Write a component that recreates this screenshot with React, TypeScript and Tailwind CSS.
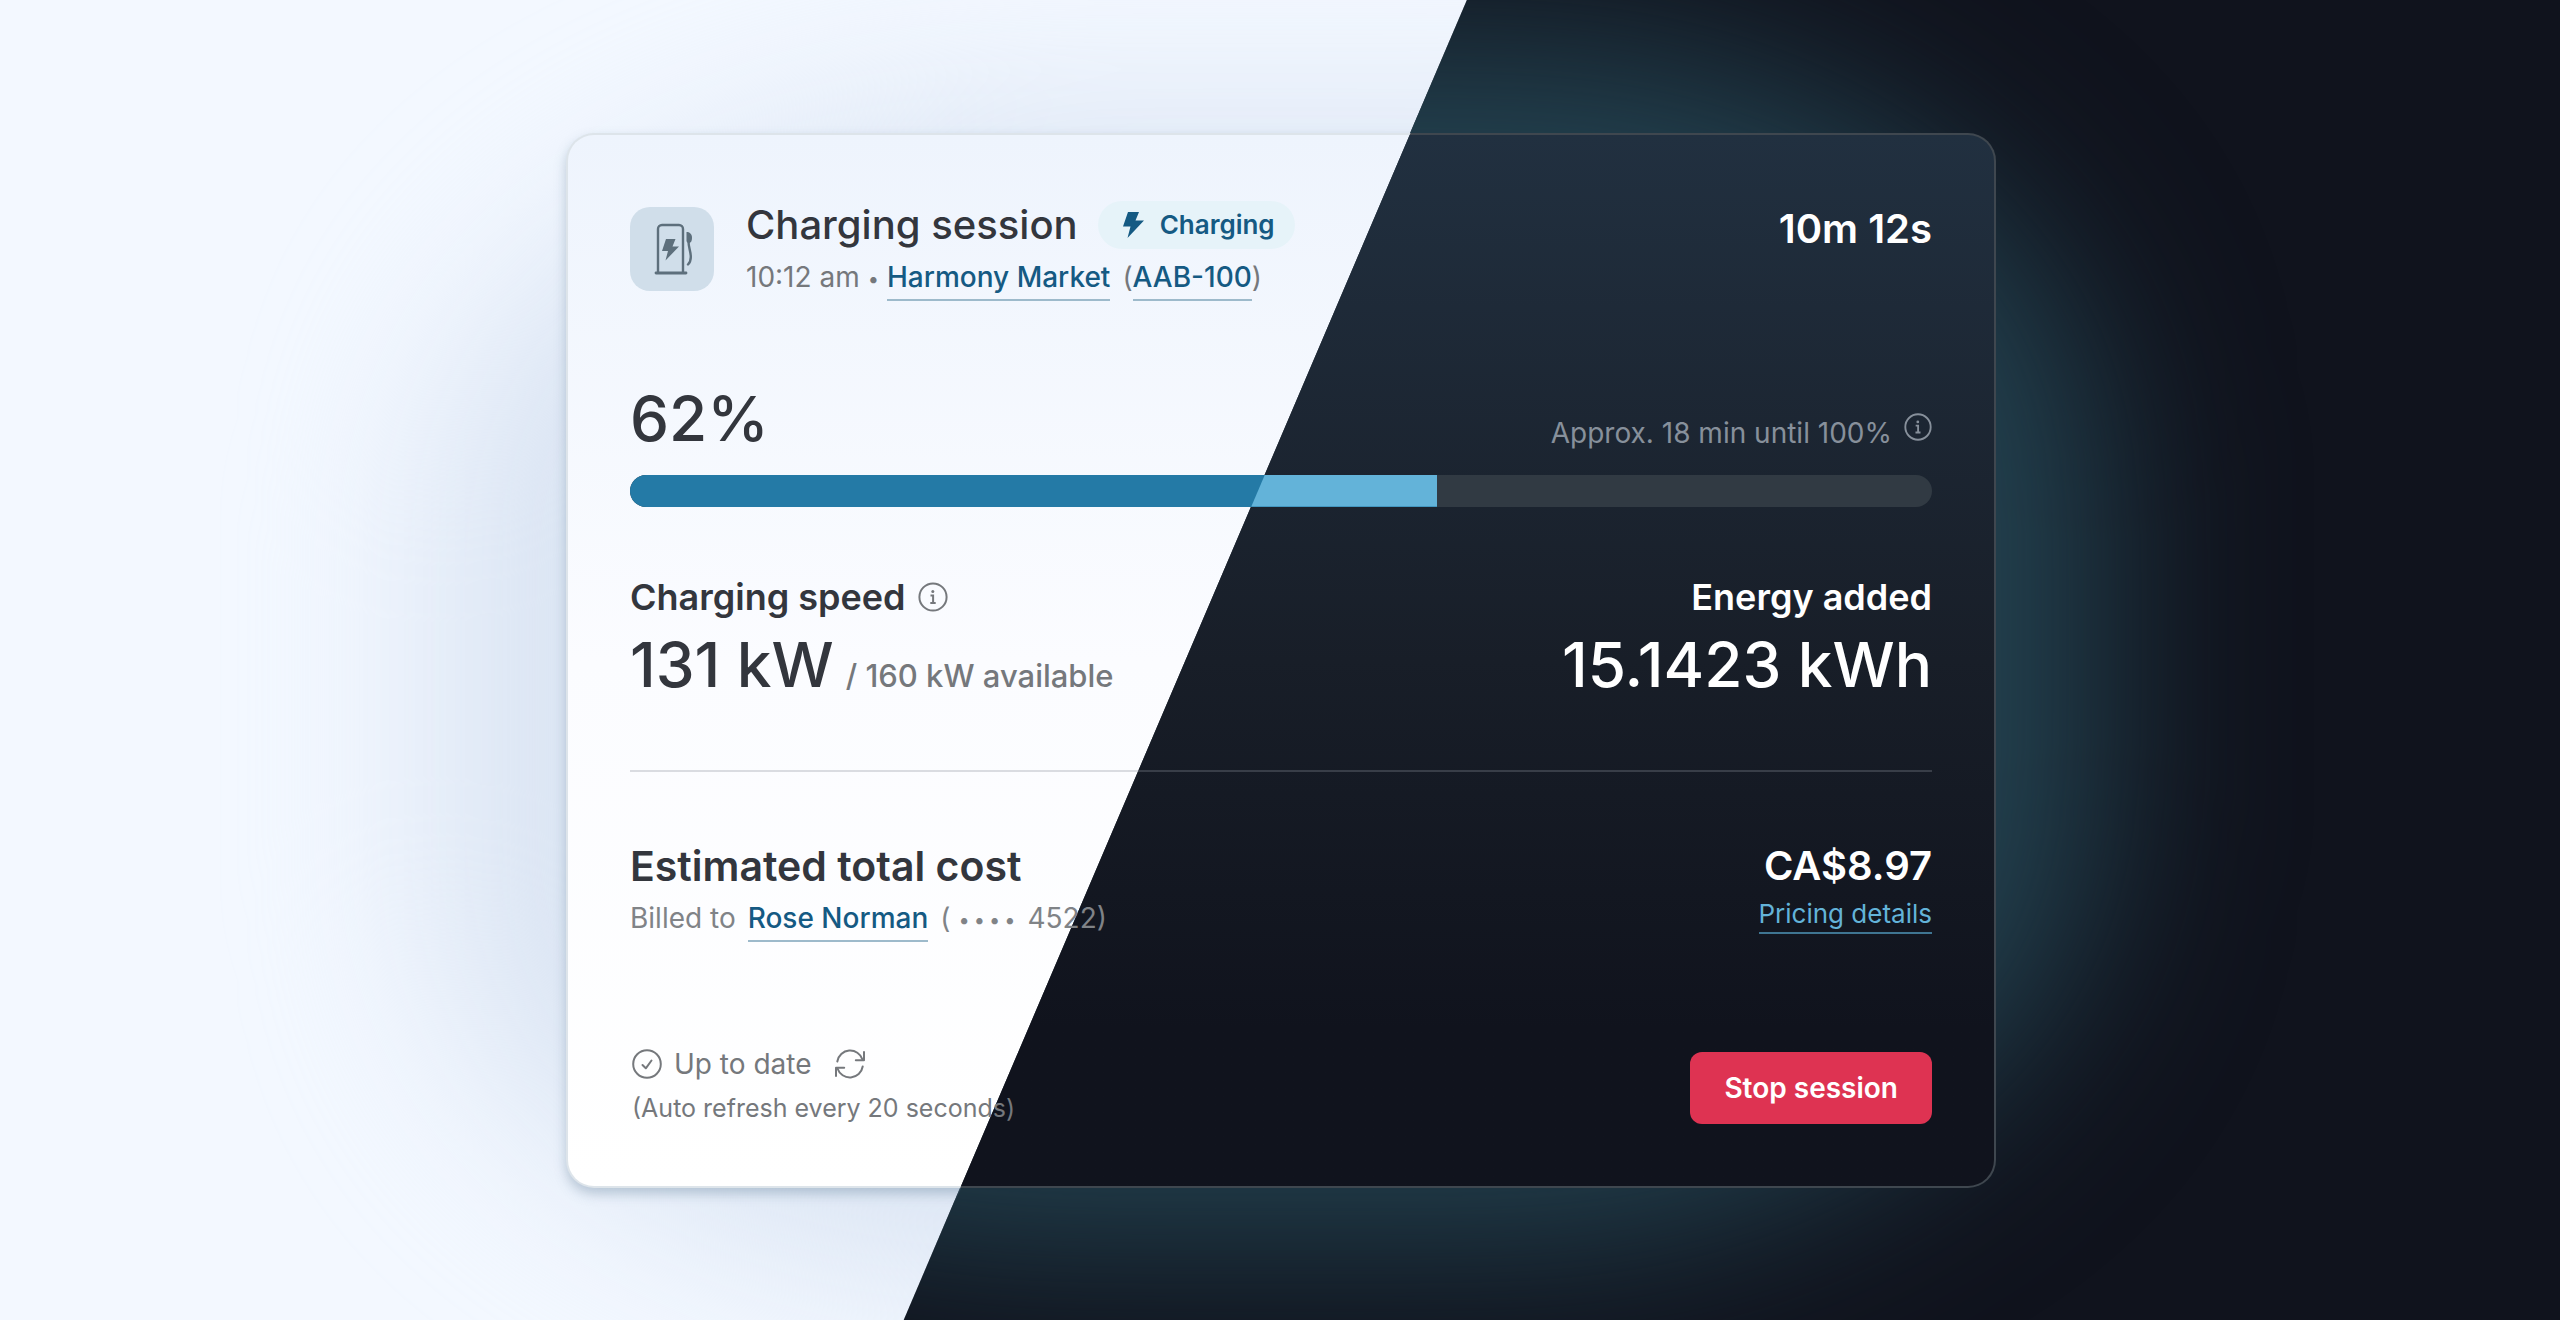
import { useId, type ReactNode } from "react";

function ChargerIcon() {
  return (
    <svg viewBox="0 0 84 84" className="size-[84px]" fill="none" aria-hidden="true">
      <path d="M28 65V22a4 4 0 0 1 4-4h17a4 4 0 0 1 4 4v43" stroke="#5d6f7c" strokeWidth="2.4" />
      <path d="M26 66h30" stroke="#5d6f7c" strokeWidth="2.8" strokeLinecap="round" />
      <path d="M36 32h9.500l-3 7.500H49L35.500 53.500 38 44h-6z" fill="#5d6f7c" />
      <path d="M56.500 25c3 0 5.500 2 5.500 5.500 0 3-.8 5.500-3.200 5.500-1.400 0-2.300-1-2.300-2.500z" fill="#5d6f7c" />
      <path d="M58.500 34c0 7 2.300 10 2.300 16 0 3.500-.8 5.500-2.800 7.500" stroke="#5d6f7c" strokeWidth="2.4" strokeLinecap="round" />
    </svg>
  );
}

function BoltIcon() {
  return (
    <svg viewBox="0 0 22 26" className="h-[26px] w-[22px]" fill="#155a83" aria-hidden="true">
      <path d="M6 0h11l-3.500 8.500H22L5.500 26l3-11.500H1z" />
    </svg>
  );
}

function InfoIcon({ className }: { className: string }) {
  return (
    <svg viewBox="0 0 30 30" className={className} fill="none" stroke="currentColor" strokeWidth="2" aria-hidden="true">
      <circle cx="15" cy="15" r="13.600" />
      <circle cx="14.800" cy="9.600" r="1.500" fill="currentColor" stroke="none" />
      <path d="M12.500 13.500h2.600v7.300M12.300 20.900h5.400" />
    </svg>
  );
}

function CheckIcon() {
  return (
    <svg viewBox="0 0 30 30" className="size-[30px]" fill="none" stroke="currentColor" strokeWidth="2" strokeLinecap="round" strokeLinejoin="round" aria-hidden="true">
      <circle cx="15" cy="15" r="13.800" />
      <path d="M10.500 16l3.300 3.300L19.500 11.500" />
    </svg>
  );
}

function RefreshIcon() {
  return (
    <svg viewBox="0 0 30 30" className="size-[30px]" fill="none" stroke="currentColor" strokeWidth="2" strokeLinecap="round" strokeLinejoin="round" aria-hidden="true">
      <path d="M2.300 12.500A13 13 0 0 1 27.500 10.500" />
      <path d="M29 3v8.200h-8.200" />
      <path d="M27.700 17.500A13 13 0 0 1 2.500 19.500" />
      <path d="M1 27v-8.200h8.200" />
    </svg>
  );
}

function TextLink({ children }: { children: ReactNode }) {
  return (
    <a href="#" className="inline-block border-b-2 border-[#9dbacb] pb-1 font-medium leading-9 text-[#155a83]">
      {children}
    </a>
  );
}

function Backdrop() {
  return (
    <div aria-hidden="true">
      <div className="absolute inset-0 bg-[#f3f8ff]">
        <div className="absolute inset-x-[17%] bottom-[3%] top-[9%] rounded-[34%] bg-[#dae4f3] blur-[90px]" />
      </div>
      <div className="absolute inset-0 bg-[#10131d] [clip-path:polygon(57.3%_0,100%_0,100%_100%,35.3%_100%)]">
        <div className="absolute inset-x-[18%] bottom-[6%] top-[3%] rounded-[36%] bg-[#234250] blur-[90px]" />
      </div>
    </div>
  );
}

function CardSurface() {
  return (
    <div aria-hidden="true">
      <div className="absolute inset-0 [clip-path:polygon(-10%_-10%,62.3%_-10%,24.5%_110%,-10%_110%)]">
        <div className="absolute inset-0 rounded-[28px] bg-[#dde4ea] shadow-[0_6px_12px_rgba(90,120,145,0.35)]" />
        <div className="absolute inset-0.5 rounded-[26px] bg-linear-to-b from-[#eef4fd] via-[#fbfcff] via-50% to-white" />
      </div>
      <div className="absolute inset-0 [clip-path:polygon(59.07%_0,120%_0,120%_110%,24.43%_110%,27.58%_100%)]">
        <div className="absolute inset-0 rounded-[28px] bg-[#3f474f]" />
        <div className="absolute inset-0.5 rounded-[26px] bg-linear-to-b from-[#213040] via-[#181e28] via-50% to-[#10131d] to-85%" />
      </div>
    </div>
  );
}

function MaskedDigits() {
  return (
    <span className="ml-2 mr-3 inline-flex items-center gap-1 self-center text-[20px]">
      <span>•</span>
      <span>•</span>
      <span>•</span>
      <span>•</span>
    </span>
  );
}

function ChargeLevel({ percent }: { percent: number }) {
  const labelId = useId();
  return (
    <section className="mt-[78px]">
      <div className="flex items-end justify-between">
        <p id={labelId} className="text-[62px] font-medium leading-20 text-[#33363d]">
          {percent}%
        </p>
        <p className="flex items-start gap-3 pb-1.5 text-[28px] leading-10 text-[#87909b]">
          Approx. 18 min until 100%
          <InfoIcon className="size-[28px]" />
        </p>
      </div>
      <div
        role="progressbar"
        aria-labelledby={labelId}
        aria-valuenow={percent}
        aria-valuemin={0}
        aria-valuemax={100}
        className="mt-4 h-8 overflow-hidden rounded-full bg-[#313a43]"
      >
        <div className="relative h-full bg-[#247aa6]" style={{ width: `${percent}%` }}>
          <div className="absolute inset-0 bg-[#63b3d9] [clip-path:polygon(78.66%_0,100%_0,100%_100%,76.97%_100%)]" />
        </div>
      </div>
    </section>
  );
}

export default function App() {
  return (
    <main className="relative flex min-h-screen items-center justify-center overflow-hidden pl-0.5 font-['Inter',sans-serif] text-[#33363d]">
      <Backdrop />
      <article className="relative w-full max-w-[1430px] p-16">
        <CardSurface />
        <div className="relative">
          <header className="flex items-start justify-between pt-1">
            <div className="flex gap-8">
              <div className="mt-1.5 size-[84px] rounded-[20px] bg-[#d0deea]">
                <ChargerIcon />
              </div>
              <div>
                <div className="flex items-center gap-5">
                  <h1 className="text-[40px] font-medium leading-12">Charging session</h1>
                  <span className="flex h-12 items-center gap-4 rounded-full bg-[#e6f3f9] pl-6 pr-5 text-[26px] font-semibold text-[#155a83]">
                    <BoltIcon />
                    Charging
                  </span>
                </div>
                <p className="mt-2 flex items-baseline text-[28px] leading-10 text-[#75787c]">
                  10:12 am<span className="mx-2 self-center text-[20px]">•</span>
                  <TextLink>Harmony Market</TextLink>
                  <span className="ml-3">(</span>
                  <TextLink>AAB-100</TextLink>)
                </p>
              </div>
            </div>
            <time className="text-[40px] font-semibold leading-14 text-white">10m 12s</time>
          </header>

          <ChargeLevel percent={62} />

          <dl className="mt-[62px] flex justify-between">
            <div>
              <dt className="flex items-center gap-3 text-[36px] font-semibold leading-14">
                Charging speed
                <InfoIcon className="size-[30px] text-[#75787c]" />
              </dt>
              <dd className="flex items-baseline gap-3 text-[62px] font-medium leading-20">
                131 kW <span className="text-[31px] text-[#75787c]">/ 160 kW available</span>
              </dd>
            </div>
            <div className="text-right text-white">
              <dt className="text-[36px] font-semibold leading-14">Energy added</dt>
              <dd className="text-[62px] font-medium leading-20">15.1423 kWh</dd>
            </div>
          </dl>

          <hr className="mt-[54px] border-t-2 border-[#8a919b]/30" />

          <section className="mt-[66px] flex items-start justify-between">
            <div>
              <h2 className="text-[41px] font-semibold leading-14">Estimated total cost</h2>
              <p className="mt-1 flex items-baseline text-[28px] leading-10 text-[#808387]">
                Billed to
                <span className="ml-3">
                  <TextLink>Rose Norman</TextLink>
                </span>
                <span className="ml-3">(</span>
                <MaskedDigits />
                4522)
              </p>
            </div>
            <div className="text-right">
              <p className="text-[40px] font-semibold leading-14 text-white">CA$8.97</p>
              <a href="#" className="mt-0.5 inline-block border-b-2 border-[#3f7592] text-[26px] leading-9 text-[#63b3d9]">
                Pricing details
              </a>
            </div>
          </section>

          <footer className="mt-[98px] flex items-end justify-between text-[#75787c]">
            <div className="pl-0.5">
              <div className="flex items-center text-[28px] leading-12">
                <CheckIcon />
                <span className="ml-3">Up to date</span>
                <button type="button" aria-label="Refresh" className="ml-6">
                  <RefreshIcon />
                </button>
              </div>
              <p className="mt-1 text-[25px] leading-8">(Auto refresh every 20 seconds)</p>
            </div>
            <button type="button" className="h-[72px] rounded-xl bg-[#de3352] px-[34px] text-[28px] font-semibold text-white">
              Stop session
            </button>
          </footer>
        </div>
      </article>
    </main>
  );
}
